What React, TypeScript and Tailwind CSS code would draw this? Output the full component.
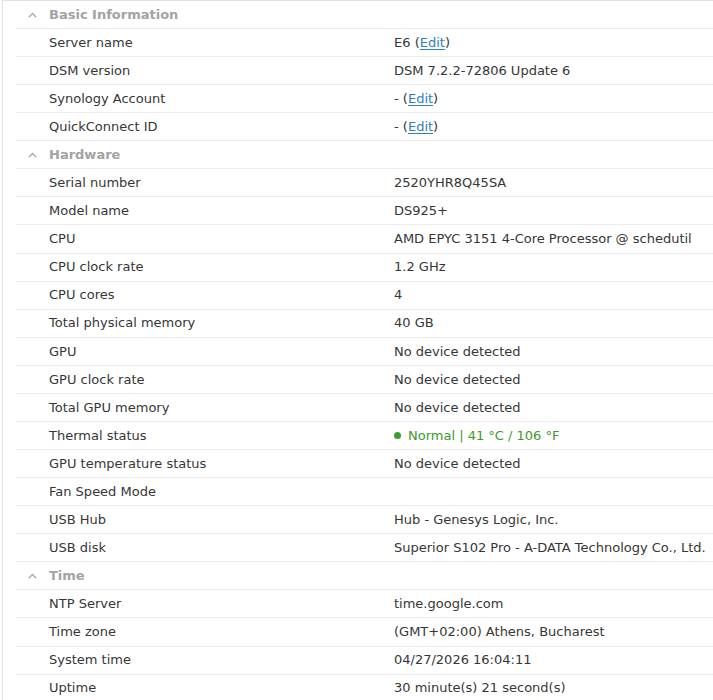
import React from "react";

type Row = { label: string; value: React.ReactNode };
type Section = { title: string; rows: Row[] };

function Edit({ prefix }: { prefix: string }) {
  return (
    <>
      {prefix} (<span className="text-[#2d7fc2] underline underline-offset-2">Edit</span>)
    </>
  );
}

const sections: Section[] = [
  {
    title: "Basic Information",
    rows: [
      { label: "Server name", value: <Edit prefix="E6" /> },
      { label: "DSM version", value: "DSM 7.2.2-72806 Update 6" },
      { label: "Synology Account", value: <Edit prefix="-" /> },
      { label: "QuickConnect ID", value: <Edit prefix="-" /> },
    ],
  },
  {
    title: "Hardware",
    rows: [
      { label: "Serial number", value: "2520YHR8Q45SA" },
      { label: "Model name", value: "DS925+" },
      { label: "CPU", value: "AMD EPYC 3151 4-Core Processor @ schedutil" },
      { label: "CPU clock rate", value: "1.2 GHz" },
      { label: "CPU cores", value: "4" },
      { label: "Total physical memory", value: "40 GB" },
      { label: "GPU", value: "No device detected" },
      { label: "GPU clock rate", value: "No device detected" },
      { label: "Total GPU memory", value: "No device detected" },
      {
        label: "Thermal status",
        value: (
          <span className="flex items-center text-[#3d9a2b]">
            <span className="mr-[7px] h-[7px] w-[7px] rounded-full bg-[#3aa02a]" />
            Normal | 41 °C / 106 °F
          </span>
        ),
      },
      { label: "GPU temperature status", value: "No device detected" },
      { label: "Fan Speed Mode", value: "" },
      { label: "USB Hub", value: "Hub - Genesys Logic, Inc." },
      { label: "USB disk", value: "Superior S102 Pro - A-DATA Technology Co., Ltd." },
    ],
  },
  {
    title: "Time",
    rows: [
      { label: "NTP Server", value: "time.google.com" },
      { label: "Time zone", value: "(GMT+02:00) Athens, Bucharest" },
      { label: "System time", value: "04/27/2026 16:04:11" },
      { label: "Uptime", value: "30 minute(s) 21 second(s)" },
    ],
  },
];

function Chevron() {
  return (
    <svg width="9" height="6" viewBox="0 0 9 6" className="mr-[12px]">
      <path d="M0.8 5.2 L4.5 1.5 L8.2 5.2" fill="none" stroke="#a9a9a9" strokeWidth="1.3" />
    </svg>
  );
}

export default function App() {
  return (
    <div
      className="h-[700px] w-[713px] overflow-hidden bg-white text-[13px] text-[#363636]"
      style={{ fontFamily: '"DejaVu Sans", Verdana, sans-serif' }}
    >
      <div className="ml-[2px] h-full border-l border-t border-[#e2e2e2]">
        {sections.map((s) => (
          <div key={s.title}>
            <div className="ml-[13px] flex h-[28px] items-center border-b border-[#ececec] pl-[12px] font-bold text-[#a3a3a3]">
              <Chevron />
              {s.title}
            </div>
            {s.rows.map((r) => (
              <div
                key={r.label}
                className="ml-[13px] flex h-[28.08px] items-center border-b border-[#ececec] pl-[33px]"
              >
                <div className="w-[345px] shrink-0">{r.label}</div>
                <div className="whitespace-nowrap">{r.value}</div>
              </div>
            ))}
          </div>
        ))}
      </div>
    </div>
  );
}
